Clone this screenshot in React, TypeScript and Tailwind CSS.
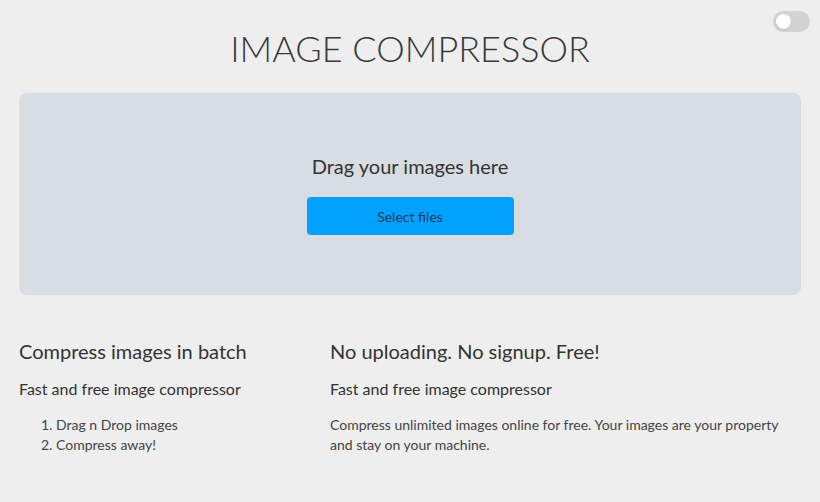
export default function App() {
  return (
    <div className="relative min-h-[502px] bg-[#eeeeee] px-[19px] text-[#333] font-['Lato',sans-serif]">
      {/* Theme toggle */}
      <div className="absolute right-[10px] top-[11px] h-[21px] w-[37px] rounded-full bg-[#d3d3d3]">
        <div className="absolute left-[3px] top-[3px] h-[15px] w-[15px] rounded-full bg-white shadow-sm" />
      </div>

      <h1 className="pt-[24px] text-center text-[36px] font-light leading-[48px] text-[#3a3a3a]">
        IMAGE COMPRESSOR
      </h1>

      {/* Drop zone */}
      <div className="mt-[21px] flex h-[202px] flex-col items-center rounded-lg bg-[#d8dce3] pt-[59px]">
        <p className="text-[20px] leading-[28px] text-[#333]">Drag your images here</p>
        <button className="mt-[17px] h-[38px] w-[207px] rounded bg-[#00a2ff] text-[14px] text-[#1d3a5a]">
          Select files
        </button>
      </div>

      {/* Info */}
      <div className="mt-[42px] flex">
        <div className="w-[311px]">
          <h2 className="text-[20px] leading-[28px] text-[#333]">Compress images in batch</h2>
          <p className="mt-[12px] text-[16px] leading-[24px] text-[#333]">Fast and free image compressor</p>
          <ol className="mt-[14px] list-decimal pl-[37px] text-[14px] leading-[20px] text-[#444]">
            <li>Drag n Drop images</li>
            <li>Compress away!</li>
          </ol>
        </div>
        <div className="flex-1">
          <h2 className="text-[20px] leading-[28px] text-[#333]">No uploading. No signup. Free!</h2>
          <p className="mt-[12px] text-[16px] leading-[24px] text-[#333]">Fast and free image compressor</p>
          <p className="mt-[14px] text-[14px] leading-[20px] text-[#444]">
            Compress unlimited images online for free. Your images are your property and stay on your machine.
          </p>
        </div>
      </div>
    </div>
  );
}
